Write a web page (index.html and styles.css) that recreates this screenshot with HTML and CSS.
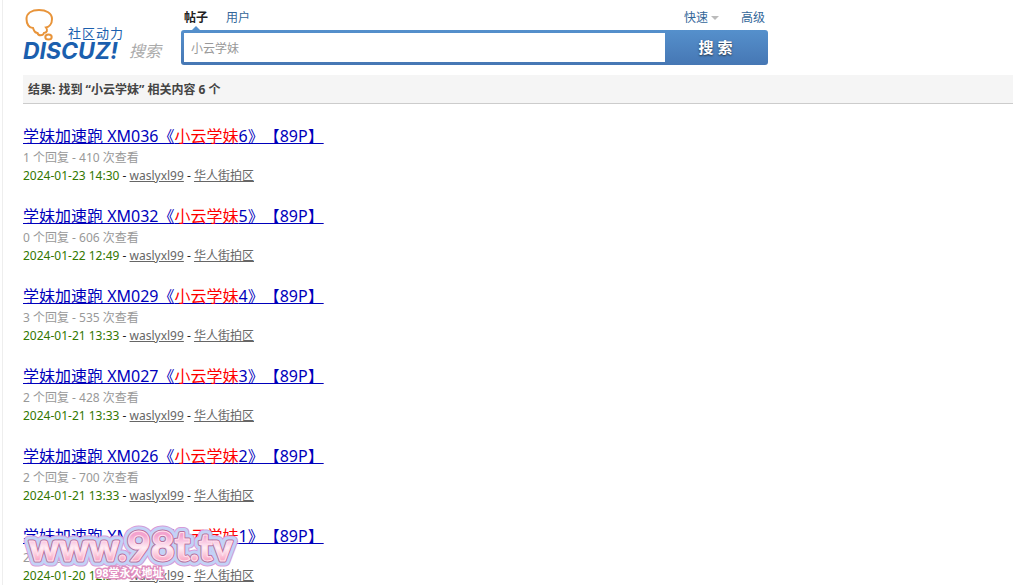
FILE: index.html
```html
<!DOCTYPE html>
<html lang="zh-CN">
<head>
    <meta charset="UTF-8">
    <meta name="viewport" content="width=device-width, initial-scale=1.0">
    <title>搜索</title>
    <link rel="stylesheet" href="styles.css">
</head>
<body>
    <div class="page">
        <header class="header">
            <a class="logo" href="#">
                <span class="logo-top">
                    <svg class="logo-bubble" viewBox="0 0 30 32">
                        <path d="M10 19 C6 19 3.500 15 3.500 10 C3.500 4 9 1 16 1 C23 1 29 4 29 10 C29 15 26 18 23 18.500 C25 21 24 24 21 24 C20 27 15 27 14.500 24 C11 24 11 21 10 19 Z"/>
                        <ellipse cx="25.500" cy="28" rx="3.200" ry="2.600"/>
                    </svg>
                    <span class="logo-slogan">社区动力</span>
                </span>
                <span class="logo-bottom">
                    <span class="logo-name">DISCUZ!</span>
                    <span class="logo-search">搜索</span>
                </span>
            </a>

            <form class="search">
                <nav class="tabs">
                    <a class="tab active" href="#">帖子</a>
                    <a class="tab" href="#">用户</a>
                    <a class="tab quick" href="#">快速</a>
                    <a class="tab" href="#">高级</a>
                </nav>
                <div class="search-bar">
                    <input class="search-input" type="text" value="小云学妹" aria-label="搜索内容">
                    <button class="search-button" type="button">搜 索</button>
                </div>
            </form>
        </header>

        <h2 class="summary">结果: 找到 “小云学妹” 相关内容 6 个</h2>

        <!-- 搜索结果 -->
        <ul class="results">
            <li>
                <h3><a href="#">学妹加速跑 XM036《<em>小云学妹</em>6》【89P】</a></h3>
                <p class="count">1 个回复 - 410 次查看</p>
                <p class="info"><span class="date">2024-01-23 14:30</span> - <a href="#">waslyxl99</a> - <a href="#">华人街拍区</a></p>
            </li>
            <li>
                <h3><a href="#">学妹加速跑 XM032《<em>小云学妹</em>5》【89P】</a></h3>
                <p class="count">0 个回复 - 606 次查看</p>
                <p class="info"><span class="date">2024-01-22 12:49</span> - <a href="#">waslyxl99</a> - <a href="#">华人街拍区</a></p>
            </li>
            <li>
                <h3><a href="#">学妹加速跑 XM029《<em>小云学妹</em>4》【89P】</a></h3>
                <p class="count">3 个回复 - 535 次查看</p>
                <p class="info"><span class="date">2024-01-21 13:33</span> - <a href="#">waslyxl99</a> - <a href="#">华人街拍区</a></p>
            </li>
            <li>
                <h3><a href="#">学妹加速跑 XM027《<em>小云学妹</em>3》【89P】</a></h3>
                <p class="count">2 个回复 - 428 次查看</p>
                <p class="info"><span class="date">2024-01-21 13:33</span> - <a href="#">waslyxl99</a> - <a href="#">华人街拍区</a></p>
            </li>
            <li>
                <h3><a href="#">学妹加速跑 XM026《<em>小云学妹</em>2》【89P】</a></h3>
                <p class="count">2 个回复 - 700 次查看</p>
                <p class="info"><span class="date">2024-01-21 13:33</span> - <a href="#">waslyxl99</a> - <a href="#">华人街拍区</a></p>
            </li>
            <li>
                <h3><a href="#">学妹加速跑 XM025《<em>小云学妹</em>1》【89P】</a></h3>
                <p class="count">2 个回复 - 512 次查看</p>
                <p class="info"><span class="date">2024-01-20 12:31</span> - <a href="#">waslyxl99</a> - <a href="#">华人街拍区</a></p>
            </li>
        </ul>
    </div>

    <!-- 左下角水印 -->
    <svg class="watermark" width="220" height="64" viewBox="0 0 220 64">
        <defs>
            <linearGradient id="pink" x1="0" y1="0" x2="0" y2="1">
                <stop offset="0.300" stop-color="#f3a3cf"/>
                <stop offset="0.550" stop-color="#fff0f6"/>
                <stop offset="0.800" stop-color="#f9a9c6"/>
            </linearGradient>
            <g id="site" class="site">
                <text x="7" y="40">www.<tspan class="big">98t</tspan>.tv</text>
            </g>
        </defs>
        <use href="#site" class="glow-outer"/>
        <use href="#site" class="glow-inner"/>
        <use href="#site" class="edge"/>
        <use href="#site" class="face"/>
        <text class="note" x="74" y="56">98堂永久地址</text>
    </svg>
</body>
</html>
```
FILE: styles.css
```css
body {
    margin: 0;
    font-family: "Noto Sans", "Noto Sans CJK SC", sans-serif;
    font-size: 12px;
    line-height: 18px;
    color: #444;
    background-color: #fff;
    position: relative;
}

a {
    color: #369;
    text-decoration: none;
}

.page {
    margin-left: 2px;
    padding-left: 20px;
    border-left: 1px solid #eee;
}

.header {
    display: flex;
    gap: 20px;
    padding: 9px 0 10px;
}

.logo {
    width: 138px;
}

.logo-top {
    display: flex;
    align-items: flex-end;
    gap: 15px;
    height: 32px;
}

.logo-bubble {
    width: 30px;
    height: 32px;
    fill: #fff;
    stroke: #e8943a;
    stroke-width: 2;
}

.logo-slogan {
    font-size: 13px;
    line-height: 16px;
    letter-spacing: 1px;
    color: #1b5fae;
}

.logo-bottom {
    display: flex;
    align-items: center;
    justify-content: space-between;
    height: 19px;
    white-space: nowrap;
}

.logo-name {
    font-family: Inter, sans-serif;
    font-size: 23px;
    font-weight: bold;
    font-style: italic;
    color: #1b5fae;
}

.logo-search {
    font-size: 16px;
    font-style: italic;
    color: #aaa;
}

.search {
    width: 587px;
}

.tabs {
    display: flex;
    gap: 18px;
    height: 21px;
    padding: 0 3px;
}

.tab.active {
    position: relative;
    font-weight: bold;
    color: #222;
}

/* 當前標籤下的小三角 */
.tab.active::after {
    content: "";
    position: absolute;
    bottom: 0;
    left: 8px;
    border: 4px solid transparent;
    border-top: 0;
    border-bottom-color: #5590cc;
}

.quick {
    display: flex;
    align-items: center;
    gap: 3px;
    height: 18px;
    margin-left: auto;
    margin-right: 4px;
}

.quick::after {
    content: "";
    border: 4px solid transparent;
    border-bottom: 0;
    border-top-color: #bbb;
}

.search-bar {
    display: flex;
    height: 35px;
    box-sizing: border-box;
    padding: 3px 0 3px 3px;
    border-radius: 3px;
    background: linear-gradient(#5590cc, #4677b4);
}

.search-input {
    flex: 1;
    min-width: 0;
    padding: 2px 7px 0;
    border: 0;
    font: inherit;
    color: #999;
    background-color: #fff;
}

.search-button {
    width: 103px;
    padding: 0 2px 2px 0;
    border: 0;
    font: bold 15px/18px "Noto Sans", "Noto Sans CJK SC", sans-serif;
    color: #fff;
    text-shadow: 0 1px 2px #234;
    background: none;
    cursor: pointer;
}

.summary {
    margin: 0;
    padding: 6px 5px 4px;
    font-size: 12px;
    line-height: 18px;
    background-color: #f5f5f5;
    border-bottom: 1px solid #ccc;
}

.results {
    display: flex;
    flex-direction: column;
    gap: 19px;
    margin: 0;
    padding: 20px 0 0;
    list-style: none;
}

.results h3 {
    margin: 0 0 1px;
    font-size: 16px;
    font-weight: normal;
    line-height: 24px;
    text-spacing-trim: space-all;
}

.results h3 a {
    color: #00b;
    text-decoration: underline;
}

.results h3 em {
    font-style: normal;
    color: #f00;
}

.results p {
    margin: 0;
    line-height: 18px;
}

.results .count {
    color: #999;
}

.info {
    color: #222;
}

.info a {
    color: #666;
    text-decoration: underline;
}

.date {
    color: #370;
}

.watermark {
    position: absolute;
    left: 22px;
    top: 521px;
}

.site {
    font-family: Lato, sans-serif;
    font-size: 37px;
    font-weight: 900;
    stroke-linejoin: round;
}

.site .big {
    font-size: 41px;
}

.glow-outer {
    fill: #d79bd8;
    stroke: #d79bd8;
    stroke-width: 11;
}

.glow-inner {
    fill: #c3d2f6;
    stroke: #c3d2f6;
    stroke-width: 9;
}

.edge {
    fill: #b5709c;
    stroke: #b5709c;
    stroke-width: 3;
}

.face {
    fill: url(#pink);
    stroke: #ffe0ee;
    stroke-width: 1;
}

.note {
    font-size: 11px;
    font-weight: bold;
    fill: #fff;
    stroke: #e08fc0;
    stroke-width: 3;
    paint-order: stroke;
}
```
